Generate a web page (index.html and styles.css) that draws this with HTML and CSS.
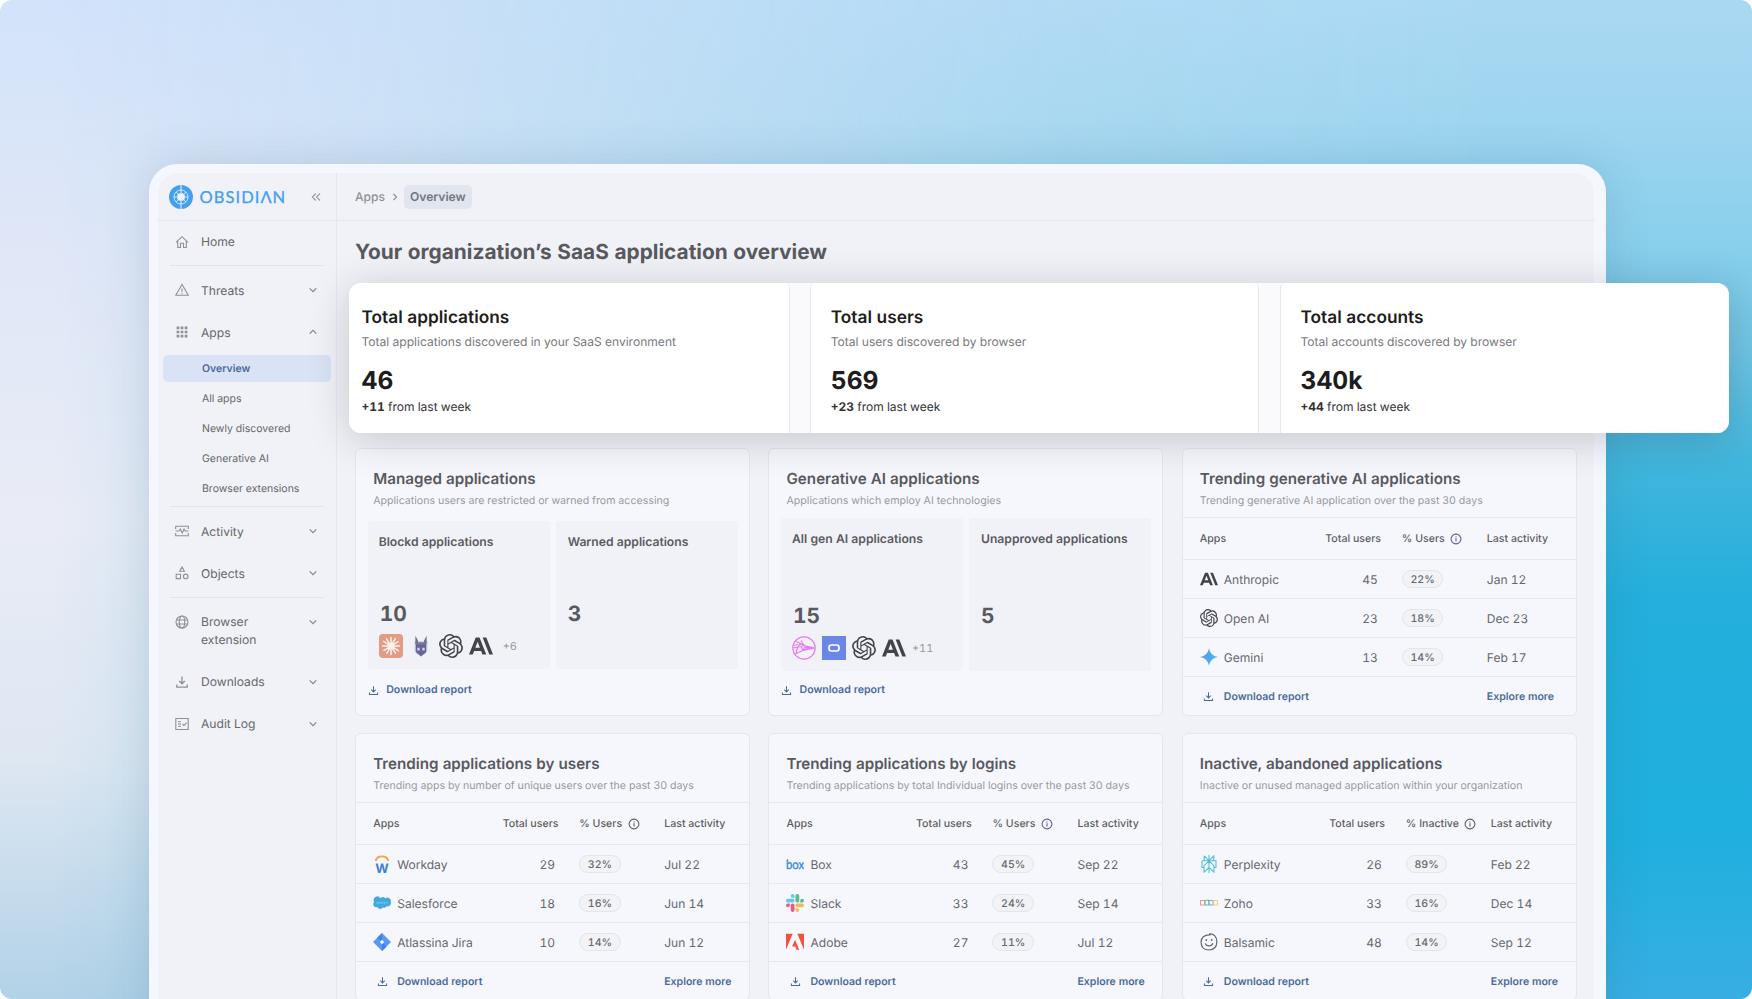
FILE: index.html
```html
<!DOCTYPE html>
<html lang="en">
<head>
<meta charset="utf-8">
<title>Obsidian – Apps overview</title>
<link rel="stylesheet" href="styles.css">
</head>
<body>
<svg class="sprite" width="0" height="0" aria-hidden="true">
  <defs>
    <linearGradient id="gem" x1="0" y1="0" x2="1" y2="0"><stop offset="0" stop-color="#8a93d8"/><stop offset=".45" stop-color="#4ea6e8"/><stop offset="1" stop-color="#58b4ea"/></linearGradient>
    <symbol id="i-chev" viewBox="0 0 10 10"><path d="M1.7 3.4 5 6.7 8.3 3.4" fill="none" stroke="currentColor" stroke-width="1.2"/></symbol>
    <symbol id="i-down" viewBox="0 0 14 14"><path d="M7 1.5v7.2M4.2 6 7 8.8 9.800 6M1.800 9.600v2.600h10.400V9.600" fill="none" stroke="currentColor" stroke-width="1.300"/></symbol>
    <symbol id="i-info" viewBox="0 0 12 12"><circle cx="6" cy="6" r="4.900" fill="none" stroke="currentColor" stroke-width="1.100"/><path d="M6 5.300v3.200M6 3.400v1.100" stroke="currentColor" stroke-width="1.100"/></symbol>
    <symbol id="i-openai" viewBox="0 0 24 24"><path fill="currentColor" d="M22.2819 9.8211a5.9847 5.9847 0 0 0-.5157-4.9108 6.0462 6.0462 0 0 0-6.5098-2.9A6.0651 6.0651 0 0 0 4.9807 4.1818a5.9847 5.9847 0 0 0-3.9977 2.9 6.0462 6.0462 0 0 0 .7427 7.0966 5.98 5.98 0 0 0 .511 4.9107 6.051 6.051 0 0 0 6.5146 2.9001A5.9847 5.9847 0 0 0 13.2599 24a6.0557 6.0557 0 0 0 5.7718-4.2058 5.9894 5.9894 0 0 0 3.9977-2.9001 6.0557 6.0557 0 0 0-.7475-7.0729zm-9.022 12.6081a4.4755 4.4755 0 0 1-2.8764-1.0408l.1419-.0804 4.7783-2.7582a.7948.7948 0 0 0 .3927-.6813v-6.7369l2.02 1.1686a.071.071 0 0 1 .038.052v5.5826a4.504 4.504 0 0 1-4.4945 4.4944zm-9.6607-4.1254a4.4708 4.4708 0 0 1-.5346-3.0137l.142.0852 4.783 2.7582a.7712.7712 0 0 0 .7806 0l5.8428-3.3685v2.3324a.0804.0804 0 0 1-.0332.0615L9.74 19.9502a4.4992 4.4992 0 0 1-6.1408-1.6464zM2.3408 7.8956a4.485 4.485 0 0 1 2.3655-1.9728V11.6a.7664.7664 0 0 0 .3879.6765l5.8144 3.3543-2.0201 1.1685a.0757.0757 0 0 1-.071 0l-4.8303-2.7865A4.504 4.504 0 0 1 2.3408 7.872zm16.5963 3.8558L13.1038 8.364 15.1192 7.2a.0757.0757 0 0 1 .071 0l4.8303 2.7913a4.4944 4.4944 0 0 1-.6765 8.1042v-5.6772a.79.79 0 0 0-.407-.667zm2.0107-3.0231l-.142-.0852-4.7735-2.7818a.7759.7759 0 0 0-.7854 0L9.409 9.2297V6.8974a.0662.0662 0 0 1 .0284-.0615l4.8303-2.7866a4.4992 4.4992 0 0 1 6.6802 4.66zM8.3065 12.863l-2.02-1.1638a.0804.0804 0 0 1-.038-.0567V6.0742a4.4992 4.4992 0 0 1 7.3757-3.4537l-.142.0805L8.704 5.459a.7948.7948 0 0 0-.3927.6813zm1.0976-2.3654l2.602-1.4998 2.6069 1.4998v2.9994l-2.5974 1.4997-2.6067-1.4997Z"/></symbol>
    <symbol id="i-anthropic" viewBox="0 0 24 24"><path fill="currentColor" d="M17.3041 3.541h-3.6718l6.696 16.918H24Zm-10.6082 0L0 20.459h3.7442l1.3693-3.5527h7.0052l1.3693 3.5528h3.7442L10.5363 3.5409Zm-.3712 10.2232 2.2914-5.9456 2.2914 5.9456Z"/></symbol>
    <symbol id="i-gemini" viewBox="0 0 18 18"><path fill="url(#gem)" d="M9 0c.7 5 3.8 8.2 9 9-5.200.8-8.300 4-9 9-.7-5-3.800-8.200-9-9 5.200-.8 8.300-4 9-9Z"/></symbol>
    <symbol id="i-claude" viewBox="0 0 24 24"><rect width="24" height="24" rx="4" fill="#e39c84"/><g stroke="#fdf3ee" stroke-width="1.5" stroke-linecap="round"><path d="M12 3.500V20.500M3.500 12H20.500M7.500 4.800 16.500 19.200M16.300 4.700 7.700 19.300M4.700 7.400 19.300 16.600M4.900 16.300 19.100 7.700"/></g></symbol>
    <symbol id="i-wolf" viewBox="0 0 16 24"><path d="M1.500 7h13v9.500L12 20.500H4L1.500 16.500Z" fill="#cdd0e8"/><path d="M2.400 1.800 4.900 6.500V10H2.400ZM13.600 1.800 11.100 6.500V10h2.500Z" fill="#6d6e82"/><path d="M2.800 8.500h10.400v9.500L8 22.500 2.800 18Z" fill="#66639f"/><path d="M4.300 13.800h2.400v2.800H4.300ZM9.300 13.800h2.400v2.800H9.300Z" fill="#d8d2d6"/><path d="M2.800 8.500h10.400v2H2.800Z" fill="#7b7a92"/></symbol>
    <symbol id="i-pink" viewBox="0 0 24 24"><g fill="none" stroke="#e879f0" stroke-width="1.200"><circle cx="12" cy="12" r="11.200"/><path d="M3.500 5 12 9.500 22.500 12 11 14.500 3 18M1 12l8-1.500M12 9.500 9 4.500M9 10.500 11 14.500M12 9.500 9 10.500M12 11.200l9 .8-10 1.200M1.500 9.500 6 8.500M5 13l-1 4M8 7.500 5 13"/></g></symbol>
    <symbol id="i-blue" viewBox="0 0 24 24"><rect width="24" height="24" fill="#6c86e6"/><rect x="7" y="9" width="10" height="6" rx="2.400" fill="none" stroke="#fff" stroke-width="1.700"/></symbol>
    <symbol id="i-workday" viewBox="0 0 18 18"><path d="M2.700 6A6.400 5.600 0 0 1 15.300 6" fill="none" stroke="#f2a444" stroke-width="1.900"/><text x="9" y="17.700" text-anchor="middle" font-family="Inter, sans-serif" font-weight="700" font-size="13" fill="#3f7fd8">W</text></symbol>
    <symbol id="i-salesforce" viewBox="0 0 18 14"><path d="M7.500 2.300A3.300 3.300 0 0 1 12.200 2.300 3.600 3.600 0 0 1 17.800 6.200 3.400 3.400 0 0 1 13.600 10.300 3 3 0 0 1 9.800 11.500 3.200 3.200 0 0 1 4.200 11 3 3 0 0 1 1.200 6 3.400 3.400 0 0 1 7.500 2.300Z" fill="#45a8df"/><path d="M3.500 6.800h11" stroke="#8ccbee" stroke-width="1.200" stroke-dasharray="1 .5"/></symbol>
    <symbol id="i-jira" viewBox="0 0 18 18"><path d="M9 0 18 9 9 18 0 9Z" fill="#5a98f8"/><path d="M9 0 4.500 4.500 9 9V6.500ZM9 18l4.500-4.500L9 9v2.500Z" fill="#3f82ee"/><path d="M9 6.800 11.200 9 9 11.200 6.800 9Z" fill="#f5f7fd"/></symbol>
    <symbol id="i-box" viewBox="0 0 18 12"><text x="0" y="10.500" textLength="18" lengthAdjust="spacingAndGlyphs" font-family="Lato, sans-serif" font-weight="400" font-size="13" fill="#3a8be0" stroke="#3a8be0" stroke-width=".4">box</text></symbol>
    <symbol id="i-slack" viewBox="0 0 24 24"><path fill="#ea5a84" d="M5.042 15.165a2.528 2.528 0 0 1-2.520 2.523A2.528 2.528 0 0 1 0 15.165a2.527 2.527 0 0 1 2.522-2.520h2.520v2.520zM6.313 15.165a2.527 2.527 0 0 1 2.521-2.520 2.527 2.527 0 0 1 2.521 2.520v6.313A2.528 2.528 0 0 1 8.834 24a2.528 2.528 0 0 1-2.521-2.522v-6.313z"/><path fill="#62c8ee" d="M8.834 5.042a2.528 2.528 0 0 1-2.521-2.520A2.528 2.528 0 0 1 8.834 0a2.528 2.528 0 0 1 2.521 2.522v2.520H8.834zM8.834 6.313a2.528 2.528 0 0 1 2.521 2.521 2.528 2.528 0 0 1-2.521 2.521H2.522A2.528 2.528 0 0 1 0 8.834a2.528 2.528 0 0 1 2.522-2.521h6.312z"/><path fill="#55bd96" d="M18.956 8.834a2.528 2.528 0 0 1 2.522-2.521A2.528 2.528 0 0 1 24 8.834a2.528 2.528 0 0 1-2.522 2.521h-2.522V8.834zM17.688 8.834a2.528 2.528 0 0 1-2.523 2.521 2.527 2.527 0 0 1-2.520-2.521V2.522A2.527 2.527 0 0 1 15.165 0a2.528 2.528 0 0 1 2.523 2.522v6.312z"/><path fill="#eebb55" d="M15.165 18.956a2.528 2.528 0 0 1 2.523 2.522A2.528 2.528 0 0 1 15.165 24a2.527 2.527 0 0 1-2.520-2.522v-2.522h2.520zM15.165 17.688a2.527 2.527 0 0 1-2.520-2.523 2.526 2.526 0 0 1 2.520-2.520h6.313A2.527 2.527 0 0 1 24 15.165a2.528 2.528 0 0 1-2.522 2.523h-6.313z"/></symbol>
    <symbol id="i-adobe" viewBox="0 0 24 22"><path fill="#f4523c" d="M13.966 22.624l-1.690-4.281H8.122l3.892-9.144 5.662 13.425zM8.884 1.376H0v21.248zm15.116 0h-8.884L24 22.624Z" transform="translate(0 -1.300)"/></symbol>
    <symbol id="i-perplexity" viewBox="0 0 18 18"><path d="M9 0v18M4.200.8 9 5.800 13.800.8V5.800M4.200.8V5.800M2 5.800h14v6.700h-2M2 5.800v6.700h2M9 5.800 4 10.700v6.400l5-4.600 5 4.600v-6.400L9 5.800" fill="none" stroke="#4cbfd6" stroke-width="1.050"/></symbol>
    <symbol id="i-zoho" viewBox="0 0 18 8"><g fill="none" stroke-width=".9"><rect x=".5" y="1.500" width="4.500" height="4.500" stroke="#ee8d8d"/><rect x="4.700" y="1.300" width="4.300" height="4.600" stroke="#6fbf8f" transform="rotate(-12 7 3.600)"/><rect x="8.800" y="1.500" width="4.300" height="4.500" stroke="#6ca6d4"/><rect x="13" y="1.500" width="4.500" height="4.500" stroke="#edc884"/></g></symbol>
    <symbol id="i-smile" viewBox="0 0 18 18"><path d="M9 .9C14 .5 17 4 16.800 9.100 16.700 14 13.800 17 9 17 4 17 1.200 14.200 1.100 9.300 1 4.500 4 1.600 10.500 2M5.200 10.300C6.200 13.600 11.800 13.700 12.900 10.200" fill="none" stroke="#66676c" stroke-width="1.200"/><circle cx="6.300" cy="7" r=".9" fill="#66676c"/><circle cx="11.700" cy="7" r=".9" fill="#66676c"/></symbol>
  </defs>
</svg>

<div class="stage">
  <div class="panel">
    <div class="app">
      <aside class="sidebar">
        <div class="brand">
          <svg class="brand-mark" viewBox="0 0 24 24"><circle cx="12" cy="12" r="12" fill="#449fee"/><g fill="none" stroke="#eef4fb"><circle cx="12" cy="12" r="7" stroke-width=".8"/><path d="M12 0v8M12 16v8" stroke-width="1"/><path d="M5 12h3M16 12h3M7 7l2.500 2.500M17 7l-2.500 2.500M7 17l2.500-2.500M17 17l-2.500-2.500" stroke-width=".8"/></g><path d="M10 8.200h4L15.800 10v4L14 15.800h-4L8.200 14v-4Z" fill="#eef4fb"/></svg>
          <span class="wordmark">OBSIDI&Lambda;N</span>
          <svg class="collapse" viewBox="0 0 10 10"><path d="M4.800 1.500 1.300 5l3.500 3.500M9 1.500 5.500 5 9 8.500" fill="none" stroke="currentColor" stroke-width="1.100"/></svg>
        </div>
        <nav class="nav">
          <a class="item item-home"><svg viewBox="0 0 14 14"><path d="M1 7.300 7 1.700l6 5.600M2.700 6v6.500h2.800V8.300h3v4.200h2.800V6" fill="none" stroke="currentColor" stroke-width="1.100"/></svg><span>Home</span></a>
          <hr>
          <a class="item"><svg viewBox="0 0 14 14"><path d="M7 1.300 13.200 12.300H.8ZM7 5.500v3.300M7 9.700v1.200" fill="none" stroke="currentColor" stroke-width="1.100"/></svg><span>Threats</span><svg class="chev"><use href="#i-chev"/></svg></a>
          <a class="item"><svg viewBox="0 0 14 14"><g fill="currentColor"><path d="M1.600 1.600h2.700v2.700H1.600ZM5.650 1.600h2.700v2.700h-2.700ZM9.700 1.600h2.700v2.700H9.700ZM1.600 5.650h2.700v2.700H1.600ZM5.650 5.650h2.700v2.700h-2.700ZM9.700 5.650h2.700v2.700H9.700ZM1.600 9.700h2.700v2.700H1.600ZM5.650 9.700h2.700v2.700h-2.700ZM9.700 9.700h2.700v2.700H9.700Z"/></g></svg><span>Apps</span><svg class="chev chev-up"><use href="#i-chev"/></svg></a>
          <a class="sub sub-active">Overview</a>
          <a class="sub">All apps</a>
          <a class="sub">Newly discovered</a>
          <a class="sub">Generative AI</a>
          <a class="sub">Browser extensions</a>
          <hr>
          <a class="item"><svg viewBox="0 0 14 14"><path d="M.7 5V2.200h12.600V5M.7 9v2.800h12.600V9M.7 7h3.100l1.500-2 1.900 4 1.800-3.800L10.300 7h3" fill="none" stroke="currentColor" stroke-width="1.100"/></svg><span>Activity</span><svg class="chev"><use href="#i-chev"/></svg></a>
          <a class="item"><svg viewBox="0 0 14 14"><path d="M7 1 9.400 5.300H4.600ZM1.200 8.300h4.300v4.300H1.200Z" fill="none" stroke="currentColor" stroke-width="1.100"/><circle cx="10.700" cy="10.400" r="2.300" fill="none" stroke="currentColor" stroke-width="1.100"/></svg><span>Objects</span><svg class="chev"><use href="#i-chev"/></svg></a>
          <hr>
          <a class="item item-tall"><svg viewBox="0 0 14 14"><g fill="none" stroke="currentColor" stroke-width="1.100"><circle cx="7" cy="7" r="6"/><ellipse cx="7" cy="7" rx="2.700" ry="6"/><path d="M1.400 5h11.200M1.400 9h11.200"/></g></svg><span>Browser<br>extension</span><svg class="chev"><use href="#i-chev"/></svg></a>
          <a class="item item-low"><svg><use href="#i-down"/></svg><span>Downloads</span><svg class="chev"><use href="#i-chev"/></svg></a>
          <a class="item item-low"><svg viewBox="0 0 14 14"><path d="M.8 1.500h12.400v11H.8ZM3 4.700h3M3 7h3M3 9.300h3M7.500 7l1.500 1.500 2.700-2.900" fill="none" stroke="currentColor" stroke-width="1.100"/></svg><span>Audit Log</span><svg class="chev"><use href="#i-chev"/></svg></a>
        </nav>
      </aside>

      <main class="main">
        <div class="crumbs">
          <span>Apps</span>
          <svg viewBox="0 0 8 10"><path d="M2.500 2 5.500 5l-3 3" fill="none" stroke="currentColor" stroke-width="1.200"/></svg>
          <b>Overview</b>
        </div>
        <h1>Your organization’s SaaS application overview</h1>

        <section class="stats">
          <div class="stat stat-first"><h2>Total applications</h2><p>Total applications discovered in your SaaS environment</p><strong>46</strong><small><b>+11</b> from last week</small></div>
          <div class="stat"><h2>Total users</h2><p>Total users discovered by browser</p><strong>569</strong><small><b>+23</b> from last week</small></div>
          <div class="stat stat-last"><h2>Total accounts</h2><p>Total accounts discovered by browser</p><strong>340k</strong><small><b>+44</b> from last week</small></div>
        </section>

        <section class="cards">
          <article class="card">
            <header><h3>Managed applications</h3><p>Applications users are restricted or warned from accessing</p></header>
            <div class="tiles">
              <div class="tile"><h4>Blockd applications</h4><strong class="one">10</strong>
                <div class="logos"><svg class="l24"><use href="#i-claude"/></svg><svg class="lwolf"><use href="#i-wolf"/></svg><svg class="l24"><use href="#i-openai"/></svg><svg class="l24"><use href="#i-anthropic"/></svg><span>+6</span></div>
              </div>
              <div class="tile"><h4>Warned applications</h4><strong>3</strong></div>
            </div>
            <a class="report"><svg><use href="#i-down"/></svg>Download report</a>
          </article>

          <article class="card card-gen">
            <header><h3>Generative AI applications</h3><p>Applications which employ AI technologies</p></header>
            <div class="tiles">
              <div class="tile"><h4>All gen AI applications</h4><strong class="one">15</strong>
                <div class="logos"><svg class="l24"><use href="#i-pink"/></svg><svg class="l24"><use href="#i-blue"/></svg><svg class="l24"><use href="#i-openai"/></svg><svg class="l24"><use href="#i-anthropic"/></svg><span>+11</span></div>
              </div>
              <div class="tile"><h4>Unapproved applications</h4><strong>5</strong></div>
            </div>
            <a class="report"><svg><use href="#i-down"/></svg>Download report</a>
          </article>

          <article class="card card-tight">
            <header><h3>Trending generative AI applications</h3><p>Trending generative AI application over the past 30 days</p></header>
            <div class="row head"><span>Apps</span><span class="num">Total users</span><span class="pct">% Users<svg class="violet"><use href="#i-info"/></svg></span><span>Last activity</span></div>
            <div class="row"><span class="name"><svg><use href="#i-anthropic"/></svg>Anthropic</span><span class="num">45</span><span><i>22%</i></span><span>Jan 12</span></div>
            <div class="row"><span class="name"><svg><use href="#i-openai"/></svg>Open AI</span><span class="num">23</span><span><i>18%</i></span><span>Dec 23</span></div>
            <div class="row"><span class="name"><svg><use href="#i-gemini"/></svg>Gemini</span><span class="num">13</span><span><i>14%</i></span><span>Feb 17</span></div>
            <div class="row foot"><span class="name"><svg><use href="#i-down"/></svg>Download report</span><span></span><span></span><span>Explore more</span></div>
          </article>

          <article class="card">
            <header><h3>Trending applications by users</h3><p>Trending apps by number of unique users over the past 30 days</p></header>
            <div class="row head"><span>Apps</span><span class="num">Total users</span><span class="pct">% Users<svg><use href="#i-info"/></svg></span><span>Last activity</span></div>
            <div class="row"><span class="name"><svg><use href="#i-workday"/></svg>Workday</span><span class="num">29</span><span><i>32%</i></span><span>Jul 22</span></div>
            <div class="row"><span class="name"><svg><use href="#i-salesforce"/></svg>Salesforce</span><span class="num">18</span><span><i>16%</i></span><span>Jun 14</span></div>
            <div class="row"><span class="name"><svg><use href="#i-jira"/></svg>Atlassina Jira</span><span class="num">10</span><span><i>14%</i></span><span>Jun 12</span></div>
            <div class="row foot"><span class="name"><svg><use href="#i-down"/></svg>Download report</span><span></span><span></span><span>Explore more</span></div>
          </article>

          <article class="card">
            <header><h3>Trending applications by logins</h3><p>Trending applications by total Individual logins over the past 30 days</p></header>
            <div class="row head"><span>Apps</span><span class="num">Total users</span><span class="pct">% Users<svg class="violet"><use href="#i-info"/></svg></span><span>Last activity</span></div>
            <div class="row"><span class="name"><svg><use href="#i-box"/></svg>Box</span><span class="num">43</span><span><i>45%</i></span><span>Sep 22</span></div>
            <div class="row"><span class="name"><svg><use href="#i-slack"/></svg>Slack</span><span class="num">33</span><span><i>24%</i></span><span>Sep 14</span></div>
            <div class="row"><span class="name"><svg><use href="#i-adobe"/></svg>Adobe</span><span class="num">27</span><span><i>11%</i></span><span>Jul 12</span></div>
            <div class="row foot"><span class="name"><svg><use href="#i-down"/></svg>Download report</span><span></span><span></span><span>Explore more</span></div>
          </article>

          <article class="card">
            <header><h3>Inactive, abandoned applications</h3><p>Inactive or unused managed application within your organization</p></header>
            <div class="row head"><span>Apps</span><span class="num">Total users</span><span class="pct">% Inactive<svg><use href="#i-info"/></svg></span><span>Last activity</span></div>
            <div class="row"><span class="name"><svg><use href="#i-perplexity"/></svg>Perplexity</span><span class="num">26</span><span><i>89%</i></span><span>Feb 22</span></div>
            <div class="row"><span class="name"><svg><use href="#i-zoho"/></svg>Zoho</span><span class="num">33</span><span><i>16%</i></span><span>Dec 14</span></div>
            <div class="row"><span class="name"><svg><use href="#i-smile"/></svg>Balsamic</span><span class="num">48</span><span><i>14%</i></span><span>Sep 12</span></div>
            <div class="row foot"><span class="name"><svg><use href="#i-down"/></svg>Download report</span><span></span><span></span><span>Explore more</span></div>
          </article>
        </section>
      </main>
    </div>
  </div>
</div>
</body>
</html>
```
FILE: styles.css
```css
* { box-sizing: border-box; }
html, body { margin: 0; height: 999px; overflow: hidden; background: #fff; }
body { font-family: Inter, "Liberation Sans", sans-serif; color: #66676c; font-variant-numeric: tabular-nums; text-rendering: geometricPrecision; }
h1, h2, h3, h4, p { margin: 0; }
i { font-style: normal; }
svg { display: block; flex: none; }
.sprite { position: absolute; }

/* Backdrop */
.stage {
  position: relative;
  isolation: isolate;
  width: 1752px;
  height: 999px;
  overflow: hidden;
  border-radius: 12px;
  padding: 164px 0 0 148.5px;
  background: linear-gradient(180deg, #d2e3fa 0%, #e0e7f7 26%, #e9ecf6 52%, #dee7f2 76%, #b2d2e7 100%);
}
.stage::before {
  content: "";
  position: absolute;
  inset: 0;
  z-index: -1;
  background: linear-gradient(180deg, #aad8f3 0%, #9ed5ef 12%, #8ad0ec 24%, #6fc5e5 35%, #42b6dc 46%, #24afdc 60%, #1fb0df 84%, #38aee3 100%);
  -webkit-mask-image: linear-gradient(90deg, transparent 3%, rgba(0,0,0,.2) 22%, rgba(0,0,0,.52) 42%, rgba(0,0,0,.8) 60%, #000 85%);
  mask-image: linear-gradient(90deg, transparent 3%, rgba(0,0,0,.2) 22%, rgba(0,0,0,.52) 42%, rgba(0,0,0,.8) 60%, #000 85%);
}

/* Window */
.panel {
  width: 1457.5px;
  height: 880px;
  padding: 9px 12px 0 9px;
  border-radius: 28px 28px 0 0;
  background: #f4f7fe;
  box-shadow: 0 0 44px rgba(50, 75, 110, .17);
}
.app { display: flex; height: 100%; background: #f1f2f7; border-radius: 20px 20px 0 0; }

/* Sidebar */
.sidebar { width: 179.5px; flex: none; border-right: 1px solid #e6e7ec; }
.brand { display: flex; align-items: center; height: 48px; padding: 0 15px 0 11.5px; border-bottom: 1px solid #e6e7ec; }
.brand-mark { width: 24px; height: 24px; }
.wordmark { margin-left: 6.5px; font: 400 16.5px/24px Lato, sans-serif; letter-spacing: 1.05px; color: #449fee; -webkit-text-stroke: .3px #449fee; }
.collapse { width: 10px; height: 10px; margin-left: auto; color: #97989d; }
.nav hr { height: 1px; margin: 3px 12px; border: 0; background: #e4e5ea; }
.item { display: flex; align-items: center; height: 42px; padding: 0 18px 0 17px; font-size: 12.1px; line-height: 19px; color: #66676c; }
.item > svg { width: 14px; height: 14px; margin-right: 12.5px; color: #8f9095; }
.item > .chev { width: 10px; height: 10px; margin: 0 0 0 auto; color: #85868b; }
.item > .chev-up { transform: rotate(180deg); }
.item-home { height: 41px; }
.item-tall { height: 60px; align-items: flex-start; padding-top: 12px; line-height: 18px; }
.item-tall > svg { margin-top: 2px; }
.item-tall > .chev { margin-top: 4px; }
.item-low { line-height: 18px; }
.sub { display: flex; align-items: center; height: 30px; padding-left: 44.5px; font-size: 10.5px; color: #66676c; }
.sub-active { height: 27px; margin: 2px 5px 1px 5.5px; padding: 0 0 1px 39px; border-radius: 5px; background: #d9e3f5; color: #4b6a9b; font-weight: 600; }

/* Main */
.main { flex: 1; min-width: 0; }
.crumbs { display: flex; align-items: center; height: 48px; padding-left: 18px; border-bottom: 1px solid #e6e7ec; font-size: 12.1px; font-weight: 500; color: #8f9095; }
.crumbs svg { width: 8px; height: 10px; margin: 0 5px 0 6px; }
.crumbs b { height: 24px; padding: 0 6px; border-radius: 5px; background: #e1e5ed; line-height: 24px; font-weight: 600; color: #707782; }
h1 { margin: 17px 0 15px 18px; font-size: 20.85px; line-height: 30px; font-weight: 700; color: #595a5f; }

/* Summary strip, wider than the window */
.stats {
  position: relative;
  display: flex;
  justify-content: space-between;
  width: 1380px;
  height: 150px;
  margin-left: 12px;
  border-radius: 12px;
  background: #faf9fc;
  box-shadow: 0 6px 42px rgba(25, 28, 42, .2);
}
.stat { display: flex; flex-direction: column; width: 449px; padding: 22.5px 0 0 19.5px; background: #fff; border: 0 solid #e9e7ee; border-width: 0 1px; border-radius: 5px 5px 0 0; }
.stat-first { width: 440.5px; padding-left: 12.5px; border-left: 0; border-radius: 12px 5px 0 12px; }
.stat-last { border-right: 0; border-radius: 5px 12px 12px 0; }
.stat h2 { font-size: 17.3px; line-height: 24px; font-weight: 600; color: #1d1d20; }
.stat p { margin-top: 3.5px; font-size: 12.07px; line-height: 18px; color: #77787d; }
.stat strong { margin-top: 12.5px; font-size: 24.6px; line-height: 32px; font-weight: 700; color: #1d1d20; }
.stat small { margin-top: 2px; font-size: 12px; line-height: 18px; color: #333337; }

/* Cards */
.cards { display: grid; grid-template-columns: repeat(3, 395px); gap: 17px 18.3px; margin: 15px 0 0 18.2px; }
.card { height: 268px; border: 1px solid #e5e6ec; border-radius: 6px; background: #f6f7fd; }
.card header { height: 69px; padding: 18.5px 0 0 17px; border-bottom: 1px solid #e7e8ee; }
.card h3 { font-size: 15.2px; line-height: 22px; font-weight: 600; color: #595a5f; }
.card header p { margin-top: 3.5px; font-size: 10.63px; line-height: 16px; color: #98999e; white-space: nowrap; }
.row { display: grid; grid-template-columns: 129.500px 54.500px 85px 1fr; align-items: center; height: 39px; padding-left: 17px; border-bottom: 1px solid #e7e8ee; font-size: 12.05px; color: #66676c; }
.row > :nth-child(3) { margin-left: 22px; }
.row > :nth-child(4) { margin-left: 22px; }
.card-tight .row { grid-template-columns: 125.500px 54.500px 85px 1fr; }
.row .num { text-align: right; padding-right: 2px; white-space: nowrap; }
.row.head { height: 42px; font-size: 10.6px; font-weight: 500; color: #5d5e63; }
.row.head .num { padding-right: 0; }
.row.foot { height: 38px; border: 0; font-size: 10.55px; font-weight: 600; color: #4b6a9b; }
.pct { display: flex; align-items: center; gap: 5.5px; white-space: nowrap; }
.pct svg { width: 12px; height: 12px; }
.violet { color: #6a5c9a; }
.row i { display: block; width: 41.5px; height: 18px; border: 1px solid #e4e5ea; border-radius: 9px; background: #f2f3f7; text-align: center; font-size: 10.6px; line-height: 17px; font-weight: 500; }
.name { display: flex; align-items: center; white-space: nowrap; }
.name svg { width: 18px; height: 18px; margin-right: 6px; color: #434449; }
.foot .name svg { width: 11px; height: 11px; margin: 0 9.500px 0 3.500px; color: #4b6a9b; }

/* Cards with tiles */
.card:has(.tiles) header { border: 0; }
.tiles { display: flex; justify-content: space-between; width: 370.500px; margin: 3px 0 0 11.5px; }
.tile { width: 182px; height: 148px; padding: 12px 0 0 11px; border-radius: 3px; background: #f1f2f7; }
.tile + .tile { padding-left: 11.5px; }
.tile h4 { font-size: 12.150px; line-height: 18px; font-weight: 600; color: #595a5f; }
.tile strong { display: block; margin-top: 51px; font-size: 21px; line-height: 26px; font-weight: 700; color: #595a5f; }
.tile .one { padding-left: 1px; }
.logos { display: flex; align-items: center; height: 24px; margin-top: 5.500px; font-size: 11px; color: #98999e; }
.logos svg { margin-right: 6px; color: #434449; }
.logos .l24 { width: 24px; height: 24px; }
.logos .lwolf { width: 16px; height: 24px; margin: 0 10px 0 4px; }
.logos span { margin-left: 4px; }
.report { display: flex; align-items: center; margin: 12px 0 0 12px; font-size: 10.6px; line-height: 18px; font-weight: 600; color: #4b6a9b; }
.report svg { width: 11px; height: 11px; margin-right: 7px; }
.card-gen .tiles { margin-top: 0; }
.card-gen .tile { height: 153px; }
.card-gen .tile strong { margin-top: 56px; }
.card-gen .logos span { margin-left: 0; }
.card-gen .report { margin-top: 10px; }
```
